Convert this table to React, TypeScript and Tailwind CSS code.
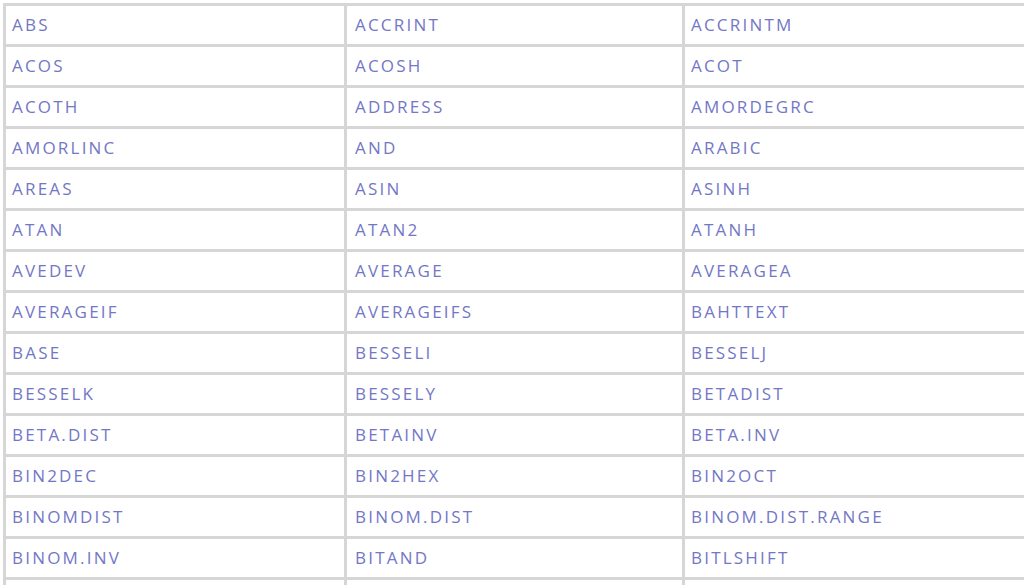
import React from "react";

const rows: string[][] = [
  ["ABS", "ACCRINT", "ACCRINTM"],
  ["ACOS", "ACOSH", "ACOT"],
  ["ACOTH", "ADDRESS", "AMORDEGRC"],
  ["AMORLINC", "AND", "ARABIC"],
  ["AREAS", "ASIN", "ASINH"],
  ["ATAN", "ATAN2", "ATANH"],
  ["AVEDEV", "AVERAGE", "AVERAGEA"],
  ["AVERAGEIF", "AVERAGEIFS", "BAHTTEXT"],
  ["BASE", "BESSELI", "BESSELJ"],
  ["BESSELK", "BESSELY", "BETADIST"],
  ["BETA.DIST", "BETAINV", "BETA.INV"],
  ["BIN2DEC", "BIN2HEX", "BIN2OCT"],
  ["BINOMDIST", "BINOM.DIST", "BINOM.DIST.RANGE"],
  ["BINOM.INV", "BITAND", "BITLSHIFT"],
  ["", "", ""],
];

export default function App() {
  return (
    <div className="w-[1024px] h-[585px] overflow-hidden bg-white pl-[3px] pt-[3px]">
      <table
        className="border-collapse w-[1060px] table-fixed"
        style={{ fontFamily: '"Open Sans", "Noto Sans", sans-serif' }}
      >
        <colgroup>
          <col className="w-[341px]" />
          <col className="w-[338px]" />
          <col className="w-[381px]" />
        </colgroup>
        <tbody>
          {rows.map((r, i) => (
            <tr key={i} className="h-[41px]">
              {r.map((c, j) => (
                <td
                  key={j}
                  className={`border-[3px] border-[#d6d6d6] align-middle text-[17px] leading-none tracking-[2.2px] text-[#7377c6] pb-[2px] ${
                    j === 1 ? "pl-[8px]" : "pl-[6px]"
                  }`}
                >
                  {c}
                </td>
              ))}
            </tr>
          ))}
        </tbody>
      </table>
    </div>
  );
}
